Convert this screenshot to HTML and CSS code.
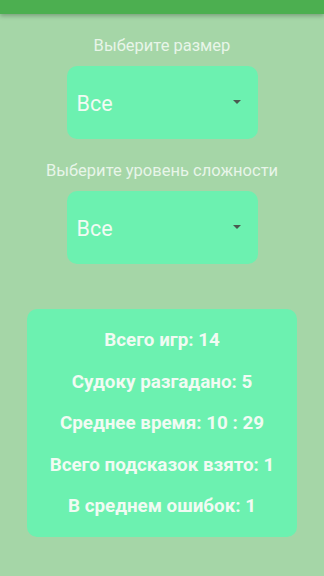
FILE: index.html
```html
<!DOCTYPE html>
<html lang="ru">
<head>
    <meta charset="UTF-8">
    <meta name="viewport" content="width=device-width, initial-scale=1.0">
    <title>Статистика</title>
    <link rel="stylesheet" href="styles.css">
</head>
<body>

    <div class="topbar"></div>

    <div class="content">
        <div class="label">Выберите размер</div>
        <div class="select">
            <span class="select-value">Все</span>
            <span class="arrow"></span>
        </div>

        <div class="label label-second">Выберите уровень сложности</div>
        <div class="select">
            <span class="select-value">Все</span>
            <span class="arrow"></span>
        </div>

        <div class="stats">
            <div class="stat">Всего игр: 14</div>
            <div class="stat">Судоку разгадано: 5</div>
            <div class="stat">Среднее время: 10 : 29</div>
            <div class="stat">Всего подсказок взято: 1</div>
            <div class="stat">В среднем ошибок: 1</div>
        </div>
    </div>

</body>
</html>
```

FILE: styles.css
```css
body {
    margin: 0;
    font-family: Roboto, "Noto Sans", sans-serif;
    background-color: #a5d6a7;
    height: 576px;
    overflow: hidden;
}

.topbar {
    height: 14px;
    background-color: #4caf50;
    box-shadow: 0 2px 4px rgba(0, 0, 0, 0.25);
}

.content {
    display: flex;
    flex-direction: column;
    align-items: center;
}

.label {
    margin-top: 21px;
    font-size: 16.5px;
    line-height: 22px;
    color: #e8f5e9;
}

.label-second {
    margin-top: 21px;
}

.select {
    margin-top: 9px;
    width: 191px;
    height: 73px;
    box-sizing: border-box;
    background-color: #6cf1b0;
    border-radius: 10px;
    display: flex;
    align-items: center;
    justify-content: space-between;
    padding: 0 16px 0 10px;
}

.select-value {
    font-size: 21.5px;
    color: #f1fbf3;
    margin-top: 2px;
}

.arrow {
    width: 0;
    height: 0;
    border-left: 4px solid transparent;
    border-right: 4px solid transparent;
    border-top: 4px solid #4a5a50;
    margin-top: -1px;
    margin-right: 1px;
}

.stats {
    margin-top: 45px;
    width: 270px;
    height: 228px;
    box-sizing: border-box;
    background-color: #6cf1b0;
    border-radius: 10px;
    display: flex;
    flex-direction: column;
    align-items: center;
    padding-top: 20px;
    gap: 19.5px;
}

.stat {
    font-size: 18.8px;
    line-height: 22px;
    font-weight: bold;
    color: #f1fbf3;
}
```
